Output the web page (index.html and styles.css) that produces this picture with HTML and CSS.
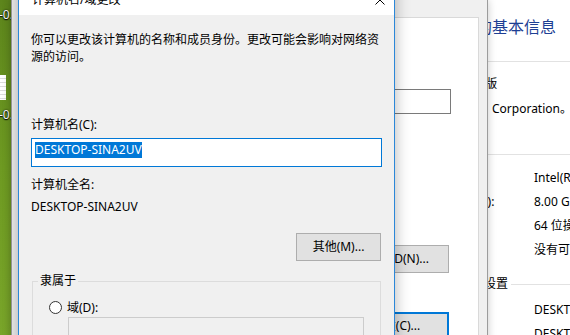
FILE: index.html
```html
<!DOCTYPE html>
<html lang="zh-CN">
<head>
<meta charset="utf-8">
<title>计算机名/域更改</title>
<link rel="stylesheet" href="styles.css">
</head>
<body>
<div class="desktop">
  <div class="desk-icon di1"><span class="desk-label">-0.</span></div>
  <div class="desk-icon di2"><span class="desk-thumb"></span><span class="desk-label">-0.</span></div>

  <section class="win cp">
    <h1 class="cp-title">查看有关计算机的基本信息</h1>
    <div class="cp-head first"><span>Windows 版本</span></div>
    <div class="cp-item">Windows 10 专业版</div>
    <div class="cp-item">© 2017 Microsoft Corporation。保留所有权利。</div>
    <div class="cp-head second"><span>系统</span></div>
    <dl class="cp-grid g1">
      <dt>处理器:</dt><dd>Intel(R) Core(TM) i7-7700 CPU @ 3.60GHz</dd>
      <dt>已安装的内存(RAM):</dt><dd>8.00 GB</dd>
      <dt>系统类型:</dt><dd>64 位操作系统，基于 x64 的处理器</dd>
      <dt>笔和触控:</dt><dd>没有可用于此显示器的笔或触控输入</dd>
    </dl>
    <div class="cp-head third"><span>计算机名、域和工作组设置</span></div>
    <dl class="cp-grid g2">
      <dt>计算机名:</dt><dd>DESKTOP-SINA2UV</dd>
      <dt>计算机全名:</dt><dd>DESKTOP-SINA2UV</dd>
    </dl>
  </section>

  <section class="win props">
    <div class="tabpanel">
      <div class="desc-box"></div>
      <button class="btn btn-wide btn-netid">网络 ID(N)...</button>
      <button class="btn btn-wide btn-default btn-change">更改(C)...</button>
    </div>
  </section>

  <section class="win dlg">
    <header class="dlg-titlebar">
      <span class="dlg-title">计算机名/域更改</span>
      <svg class="dlg-close" width="10" height="10" viewBox="0 0 10 10"><path d="M0.5 0.5L9.5 9.5M9.5 0.5L0.5 9.5" stroke="#000" stroke-width="1" fill="none"/></svg>
    </header>
    <div class="dlg-body">
      <p class="intro">你可以更改该计算机的名称和成员身份。更改可能会影响对网络资源的访问。</p>
      <label class="field-label">计算机名(C):</label>
      <div class="textbox focus"><span class="sel">DESKTOP-SINA2UV</span></div>
      <div class="field-label gap">计算机全名:</div>
      <div class="value">DESKTOP-SINA2UV</div>
      <div class="btn-line"><button class="btn btn-more">其他(M)...</button></div>
      <fieldset class="group">
        <legend>隶属于</legend>
        <div class="radio-row"><span class="radio"></span><span>域(D):</span></div>
        <div class="textbox disabled"></div>
      </fieldset>
    </div>
  </section>
</div>
</body>
</html>
```

FILE: styles.css
```css
html, body {
  margin: 0;
  padding: 0;
}
body {
  width: 570px;
  height: 335px;
  overflow: hidden;
  font-family: "Noto Sans", "Noto Sans CJK SC", sans-serif;
  font-size: 12px;
  color: #000;
}
.desktop {
  position: relative;
  width: 570px;
  height: 335px;
  overflow: hidden;
  background: linear-gradient(180deg, #5d851c 0%, #6e9a22 50%, #79a52a 100%);
}

/* desktop icons */
.desk-icon {
  position: absolute;
  left: -1px;
  display: flex;
  flex-direction: column;
  align-items: flex-start;
}
.di1 { top: 7px; }
.di2 { top: 75px; }
.desk-thumb {
  width: 6px;
  height: 25px;
  margin-left: 1px;
  margin-bottom: 7px;
  background: repeating-linear-gradient(180deg, #ffffff 0 3px, #dcdcdc 3px 4px);
}
.desk-label {
  color: #fff;
  line-height: 16px;
  text-shadow: 0 0 2px #000, 0 1px 1px #000;
}

/* windows */
.win {
  position: absolute;
  box-sizing: border-box;
}

/* control panel "system" window */
.cp {
  left: 300px;
  top: 0;
  width: 270px;
  height: 360px;
  background: #fff;
  padding-left: 64px;
  white-space: nowrap;
  overflow: hidden;
}
.cp-title {
  margin: 17px 0 0;
  font-size: 16px;
  font-weight: normal;
  line-height: 20px;
  color: #1e3f94;
}
.cp-head {
  display: flex;
  align-items: center;
  gap: 3px;
  height: 20px;
  line-height: 20px;
}
.cp-head::after {
  content: "";
  flex: 1;
  border-top: 1px solid #e2e2e2;
}
.cp-head.first { margin-top: 14px; }
.cp-head.second { margin-top: 23px; }
.cp-head.third { margin-top: 12px; }
.cp-item {
  padding-left: 22px;
  line-height: 25px;
  word-spacing: 2px;
}
.cp-grid {
  display: grid;
  grid-template-columns: 148px auto;
  margin: 2px 0 0 22px;
  line-height: 24px;
}
.cp-grid.g2 { margin-top: 4px; }
.cp-grid dt, .cp-grid dd { margin: 0; }

/* system properties dialog (behind) */
.props {
  left: 11px;
  top: 0;
  width: 477px;
  height: 360px;
  background: #f0f0f0;
  border: 1px solid #9c9c9c;
  border-top: none;
  box-shadow: 0 0 8px rgba(0, 0, 0, 0.22);
}
.tabpanel {
  margin: 17px 8px 0 7px;
  height: 330px;
  background: #fff;
  border: 1px solid #d9d9d9;
  display: flex;
  flex-direction: column;
  align-items: flex-end;
}
.desc-box {
  margin: 71px 27px 0 0;
  width: 250px;
  height: 25px;
  box-sizing: border-box;
  border: 1px solid #7a7a7a;
  background: #fff;
}
.btn {
  font: inherit;
  color: #000;
  background: #e1e1e1;
  border: 1px solid #adadad;
  padding: 0;
  box-sizing: border-box;
  line-height: 16px;
}
.btn-wide {
  width: 106px;
  height: 28px;
  margin-right: 29px;
}
.btn-netid { margin-top: 131px; }
.btn-change { margin-top: 39px; }
.btn-default { border: 2px solid #0078d7; }

/* front dialog */
.dlg {
  left: 18px;
  top: -16px;
  width: 377px;
  height: 400px;
  border: 1px solid #2b87d8;
  background: #f0f0f0;
  box-shadow: 0 0 14px rgba(0, 0, 0, 0.3);
}
.dlg-titlebar {
  height: 30px;
  background: #fff;
  display: flex;
  align-items: center;
  justify-content: space-between;
  padding: 0 9px 0 13px;
}
.dlg-title { line-height: 16px; }
.dlg-close { display: block; }
.dlg-body {
  padding: 16px 12px 0;
}
.intro {
  margin: 0;
  line-height: 17px;
}
.field-label {
  display: block;
  margin-top: 51px;
  line-height: 18px;
}
.field-label.gap { margin-top: 9px; }
.textbox {
  box-sizing: border-box;
  background: #fff;
}
.textbox.focus {
  margin-top: 4px;
  height: 29px;
  border: 1px solid #0078d7;
  padding: 2px 0 0 3px;
}
.sel {
  display: inline-block;
  background: #0078d7;
  color: #fff;
  line-height: 16px;
}
.value {
  margin-top: 4px;
  line-height: 18px;
}
.btn-line {
  display: flex;
  justify-content: flex-end;
  margin-top: 17px;
  padding-right: 1px;
}
.btn-more {
  width: 85px;
  height: 28px;
}
.group {
  margin: 12px 1px 0;
  padding: 9px 0 0;
  border: 1px solid #dcdcdc;
  min-width: 0;
  height: 100px;
}
.group legend {
  margin-left: 5px;
  padding: 0 2px;
  line-height: 16px;
}
.radio-row {
  display: flex;
  align-items: center;
  gap: 5px;
  height: 18px;
  margin-left: 16px;
}
.radio {
  width: 13px;
  height: 13px;
  box-sizing: border-box;
  border: 1px solid #333;
  border-radius: 50%;
  background: #fff;
}
.textbox.disabled {
  margin: 1px 16px 0 35px;
  height: 28px;
  border: 1px solid #cccccc;
  background: #f0f0f0;
}
```
